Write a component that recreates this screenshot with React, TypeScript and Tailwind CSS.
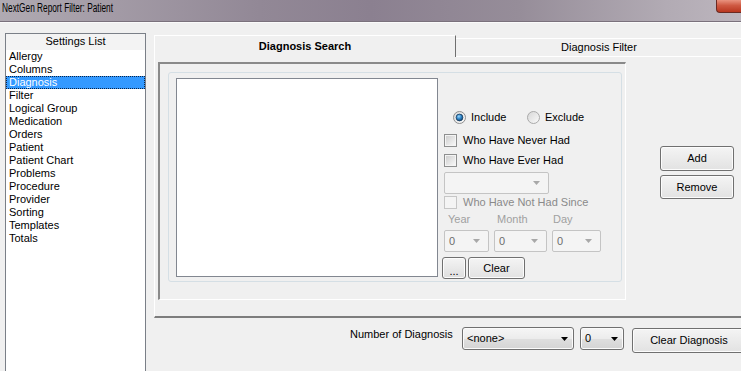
import React from "react";

function Arrow({ disabled }: { disabled?: boolean }) {
  return (
    <svg width="7" height="4" viewBox="0 0 7 4" className="shrink-0">
      <path d="M0 0H7L3.5 4Z" fill={disabled ? "#a8a8a8" : "#000"} />
    </svg>
  );
}

function RadioOn() {
  return (
    <svg width="13" height="13" viewBox="0 0 13 13" className="shrink-0">
      <defs>
        <linearGradient id="rOnBg" x1="0" y1="0" x2="1" y2="1">
          <stop offset="0" stopColor="#d8d8d8" />
          <stop offset="1" stopColor="#fdfdfd" />
        </linearGradient>
        <radialGradient id="rOnDot" cx="0.4" cy="0.35" r="0.7">
          <stop offset="0" stopColor="#9ad8ff" />
          <stop offset="0.5" stopColor="#2f86c9" />
          <stop offset="1" stopColor="#0d3d69" />
        </radialGradient>
      </defs>
      <circle cx="6.5" cy="6.5" r="6" fill="url(#rOnBg)" stroke="#8e8f8f" />
      <circle cx="6.5" cy="6.5" r="3.4" fill="url(#rOnDot)" stroke="#1a3e60" strokeWidth="0.8" />
    </svg>
  );
}

function RadioOff() {
  return (
    <svg width="13" height="13" viewBox="0 0 13 13" className="shrink-0">
      <defs>
        <linearGradient id="rOffBg" x1="0" y1="0" x2="1" y2="1">
          <stop offset="0" stopColor="#d6d6d6" />
          <stop offset="1" stopColor="#fbfbfb" />
        </linearGradient>
      </defs>
      <circle cx="6.5" cy="6.5" r="6" fill="url(#rOffBg)" stroke="#a9a9a9" />
    </svg>
  );
}

function Check({ disabled }: { disabled?: boolean }) {
  return (
    <svg width="13" height="13" viewBox="0 0 13 13" className="shrink-0">
      <defs>
        <linearGradient id="cbIn" x1="0" y1="0" x2="1" y2="1">
          <stop offset="0" stopColor="#cfcfcf" />
          <stop offset="1" stopColor="#f7f7f7" />
        </linearGradient>
      </defs>
      {disabled ? (
        <rect x="0.5" y="0.5" width="12" height="12" fill="#f4f4f4" stroke="#c6c6c6" />
      ) : (
        <>
          <rect x="0.5" y="0.5" width="12" height="12" fill="#f4f4f4" stroke="#8e8f8f" />
          <rect x="2" y="2" width="9" height="9" fill="url(#cbIn)" />
        </>
      )}
    </svg>
  );
}

function DisabledCombo({ className, text }: { className: string; text?: string }) {
  return (
    <div
      className={
        "h-[22px] flex items-center justify-between pl-[4px] pr-[8px] border border-[#c4c4c4] rounded-[2px] bg-[#f4f4f4] text-[#6d6d6d] " +
        className
      }
    >
      <span>{text ?? ""}</span>
      <Arrow disabled />
    </div>
  );
}

export default function App() {
  const items = [
    "Allergy",
    "Columns",
    "Diagnosis",
    "Filter",
    "Logical Group",
    "Medication",
    "Orders",
    "Patient",
    "Patient Chart",
    "Problems",
    "Procedure",
    "Provider",
    "Sorting",
    "Templates",
    "Totals",
  ];
  return (
    <div className="w-[741px] h-[371px] overflow-hidden bg-[#f0f0f0] font-['Liberation_Sans',Arial,sans-serif] text-[11px] leading-[13px] text-black flex flex-col">
      {/* Title bar */}
      <div className="h-[22px] shrink-0 flex items-start justify-between border-b border-[#7a717c] bg-[linear-gradient(90deg,#b0aab2_0%,#a39ba6_15%,#928896_35%,#8b8090_50%,#968d99_70%,#b2abb4_90%,#bdb6be_100%)]">
        <span className="inline-block origin-left scale-x-[0.69] pl-[3px] pt-[1px] text-[12px] leading-[14px] whitespace-nowrap text-black">
          NextGen Report Filter: Patient
        </span>
        <div className="w-[25px] h-[13px] rounded-bl-[4px] border-l border-b border-[#6b2a22] bg-[linear-gradient(180deg,#e9937f_0%,#cf5a43_45%,#b9361f_100%)]" />
      </div>

      {/* Body */}
      <div className="flex-1 min-h-0 flex items-start pt-[10px] border-t border-[#fafafa]">
        {/* Settings list */}
        <div className="ml-[5px] w-[141px] h-[360px] shrink-0 border border-[#7a7f87] bg-white flex flex-col">
          <div className="h-[16px] bg-[#f3f3f3] text-center leading-[15px]">Settings List</div>
          {items.map((it) =>
            it === "Diagnosis" ? (
              <div
                key={it}
                className="h-[13px] bg-[#3399ff] text-white pl-[2px] border border-dotted border-[#0b2447] leading-[11px]"
              >
                {it}
              </div>
            ) : (
              <div key={it} className="h-[13px] pl-[3px]">
                {it}
              </div>
            )
          )}
        </div>

        {/* Right area */}
        <div className="ml-[8px] flex-1 flex flex-col pt-[2px]">
          {/* Tabs */}
          <div className="h-[22px] flex items-end">
            <div className="w-[302px] h-[22px] relative z-10 bg-[#f0f0f0] border-t border-l border-white border-r border-r-[#6f6f6f] font-bold flex items-center justify-center">
              Diagnosis Search
            </div>
            <div className="flex-1 h-[19px] border-t border-b border-white flex items-center justify-center pr-[4px]">
              Diagnosis Filter
            </div>
          </div>

          {/* Tab panel */}
          <div className="h-[261px] border-l border-white border-b-2 border-b-[#7d7d7d] pl-[3px] pt-[5px] flex items-start">
            {/* Group box */}
            <div className="w-[468px] h-[238px] shrink-0 border-l-2 border-t-2 border-[#8a8a8a] border-r border-b border-r-white border-b-white pl-[8px] pt-[8px]">
              <div className="w-[454px] h-[210px] border border-[#d5dfe5] rounded-[3px] flex items-start pl-[7px] pt-[5px]">
                <div className="w-[262px] h-[199px] shrink-0 bg-white border border-[#828790]" />

                <div className="ml-[6px] flex flex-col">
                  <div className="mt-[33px] h-[13px] flex items-center">
                    <span className="ml-[9px] flex">
                      <RadioOn />
                    </span>
                    <span className="ml-[5px] w-[35px]">Include</span>
                    <span className="ml-[21px] flex">
                      <RadioOff />
                    </span>
                    <span className="ml-[5px]">Exclude</span>
                  </div>

                  <div className="mt-[10px] h-[13px] flex items-center gap-[6px]">
                    <Check />
                    <span>Who Have Never Had</span>
                  </div>
                  <div className="mt-[7px] h-[13px] flex items-center gap-[6px]">
                    <Check />
                    <span>Who Have Ever Had</span>
                  </div>

                  <DisabledCombo className="mt-[5px] w-[105px]" />

                  <div className="mt-[2px] h-[13px] flex items-center gap-[6px]">
                    <Check disabled />
                    <span className="text-[#8a8a8a]">Who Have Not Had Since</span>
                  </div>

                  <div className="mt-[4px] h-[13px] flex text-[#a0a0a0]">
                    <span className="w-[50px] pl-[4px]">Year</span>
                    <span className="w-[58px] pl-[3px]">Month</span>
                    <span className="pl-[1px]">Day</span>
                  </div>

                  <div className="mt-[4px] flex gap-[5px]">
                    <DisabledCombo className="w-[45px]" text="0" />
                    <DisabledCombo className="w-[53px]" text="0" />
                    <DisabledCombo className="w-[49px]" text="0" />
                  </div>

                  <div className="mt-[5px] -ml-[2px] flex gap-[2px]">
                    <div className="w-[24px] h-[22px] border border-[#707070] rounded-[3px] bg-[linear-gradient(180deg,#f4f4f4,#dedede)] shadow-[inset_0_0_0_1px_#fcfcfc] flex items-end justify-center pb-[3px] leading-[8px]">
                      ...
                    </div>
                    <div className="w-[57px] h-[22px] border border-[#707070] rounded-[3px] bg-[linear-gradient(180deg,#f4f4f4,#e2e2e2)] shadow-[inset_0_0_0_1px_#fcfcfc] flex items-center justify-center">
                      Clear
                    </div>
                  </div>
                </div>
              </div>
            </div>

            {/* Add / Remove */}
            <div className="ml-[34px] mt-[84px] flex flex-col gap-[4px]">
              <div className="w-[74px] h-[25px] border border-[#707070] rounded-[3px] bg-[linear-gradient(180deg,#f4f4f4,#e2e2e2)] shadow-[inset_0_0_0_1px_#fcfcfc] flex items-center justify-center">
                Add
              </div>
              <div className="w-[74px] h-[24px] border border-[#707070] rounded-[3px] bg-[linear-gradient(180deg,#f4f4f4,#e2e2e2)] shadow-[inset_0_0_0_1px_#fcfcfc] flex items-center justify-center">
                Remove
              </div>
            </div>
          </div>

          {/* Bottom row */}
          <div className="pt-[9px] pl-[196px] flex items-start">
            <span className="mt-[1px] w-[112px] shrink-0 whitespace-nowrap">Number of Diagnosis</span>
            <div className="w-[112px] h-[23px] shrink-0 border border-[#707070] rounded-[3px] bg-[linear-gradient(180deg,#f6f6f6_0%,#ececec_50%,#dfdfdf_51%,#d4d4d4_100%)] shadow-[inset_0_0_0_1px_#fbfbfb] flex items-center justify-between pl-[4px] pr-[5px]">
              <span>&lt;none&gt;</span>
              <Arrow />
            </div>
            <div className="ml-[6px] w-[44px] h-[23px] shrink-0 border border-[#707070] rounded-[3px] bg-[linear-gradient(180deg,#f6f6f6_0%,#ececec_50%,#dfdfdf_51%,#d4d4d4_100%)] shadow-[inset_0_0_0_1px_#fbfbfb] flex items-center justify-between pl-[4px] pr-[5px]">
              <span>0</span>
              <Arrow />
            </div>
            <div className="ml-[8px] mt-[1px] w-[114px] h-[25px] shrink-0 border border-[#707070] rounded-[3px] bg-[linear-gradient(180deg,#f4f4f4,#e2e2e2)] shadow-[inset_0_0_0_1px_#fcfcfc] flex items-center justify-center whitespace-nowrap">
              Clear Diagnosis
            </div>
          </div>
        </div>
      </div>
    </div>
  );
}
